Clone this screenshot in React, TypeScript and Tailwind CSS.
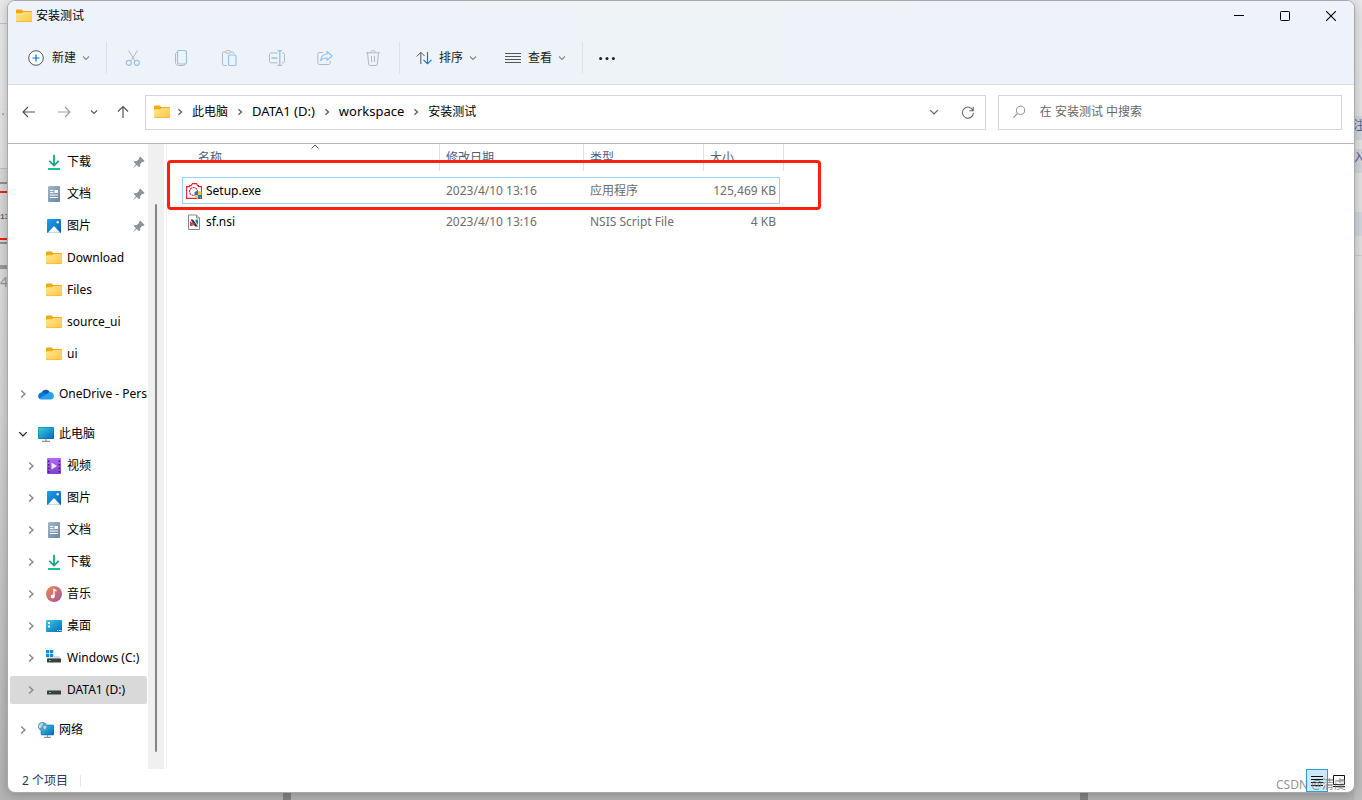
import { useState } from "react";
import type { ReactNode } from "react";

type IconProps = { className?: string };

function Svg({ children, className = "size-4" }: { children: ReactNode; className?: string }) {
  return (
    <svg className={`shrink-0 ${className}`} viewBox="0 0 16 16" fill="none" aria-hidden="true">
      {children}
    </svg>
  );
}

function FolderIcon() {
  return (
    <Svg>
      <defs>
        <linearGradient id="folder" x1="0" y1="0" x2="1" y2="1">
          <stop offset="0" stopColor="#ffe69a" />
          <stop offset="1" stopColor="#ffc83a" />
        </linearGradient>
      </defs>
      <path d="M0 2.5a1 1 0 0 1 1-1h4.6l1.6 1.5H15a1 1 0 0 1 1 1V8H0z" fill="#f2a90c" />
      <path d="M0 6.2a1 1 0 0 1 1-1h5L7.6 4H15a1 1 0 0 1 1 1v8a1 1 0 0 1-1 1H1a1 1 0 0 1-1-1z" fill="url(#folder)" />
      <path d="M.4 13.6h15.2" stroke="#e9ad2c" strokeWidth=".6" />
    </Svg>
  );
}

function DownloadIcon() {
  return (
    <Svg>
      <path d="M8 .8v10.7M3.2 6.8 8 11.6l4.8-4.8" stroke="#17a683" strokeWidth="1.8" />
      <path d="M2 15h12" stroke="#20bd91" strokeWidth="1.8" />
    </Svg>
  );
}

function DocumentIcon() {
  return (
    <Svg>
      <defs>
        <linearGradient id="doc" x1="0" y1="0" x2="1" y2="1">
          <stop offset="0" stopColor="#a5b9cc" />
          <stop offset="1" stopColor="#66839f" />
        </linearGradient>
      </defs>
      <rect x="2" width="12" height="16" rx="1" fill="url(#doc)" />
      <path d="M4 4.5h3.5M4 6.5h3.5M4 9h8M4 11.5h8" stroke="#fff" strokeWidth="1.1" />
      <rect x="8.5" y="4" width="3.5" height="3" fill="#fff" />
    </Svg>
  );
}

function PictureIcon() {
  return (
    <Svg>
      <defs>
        <linearGradient id="pic" x1="0" y1="0" x2="1" y2="1">
          <stop offset="0" stopColor="#1ba0ea" />
          <stop offset="1" stopColor="#0b62b8" />
        </linearGradient>
      </defs>
      <rect x="1" y="1" width="14" height="14" rx="1" fill="url(#pic)" />
      <path d="M1.8 14.8 7.3 8.7a1 1 0 0 1 1.4 0l5.5 6.1z" fill="#fff" />
      <circle cx="11.7" cy="4.3" r="1.2" fill="#fff" />
    </Svg>
  );
}

function VideoIcon() {
  return (
    <Svg>
      <defs>
        <linearGradient id="vid" x1="0" y1="0" x2="0" y2="1">
          <stop offset="0" stopColor="#b26af0" />
          <stop offset="1" stopColor="#7f3fd0" />
        </linearGradient>
      </defs>
      <rect x="1" width="14" height="16" rx="1" fill="url(#vid)" />
      <path d="M2.7 2.5v12M13.3 2.5v12" stroke="#3f1a7c" strokeWidth="1.5" strokeDasharray="1.5 2" />
      <path d="M5.5 4.5 11 8l-5.5 3.5z" fill="#f2e8fd" />
    </Svg>
  );
}

function MusicIcon() {
  return (
    <Svg>
      <defs>
        <linearGradient id="mus" x1="0" y1="0" x2="1" y2="1">
          <stop offset="0" stopColor="#f08a4b" />
          <stop offset="1" stopColor="#a3549f" />
        </linearGradient>
      </defs>
      <circle cx="8" cy="8" r="8" fill="url(#mus)" />
      <circle cx="6.7" cy="10.5" r="2" fill="#fff" />
      <path d="M8 10.5v-7l2.5 1.5" stroke="#fff" strokeWidth="1.4" />
    </Svg>
  );
}

function DesktopIcon() {
  return (
    <Svg>
      <defs>
        <linearGradient id="desk" x1="0" y1="0" x2="1" y2="1">
          <stop offset="0" stopColor="#35cfe4" />
          <stop offset="1" stopColor="#0a67b9" />
        </linearGradient>
      </defs>
      <rect y="2" width="16" height="12" rx="1" fill="url(#desk)" />
      <path d="M2 4h2v2H2zM2 7.5h2v2H2z" fill="#fff" />
      <path d="M11 12.500h1M12.8 12.500h1M14.5 12.500h1" stroke="#fff" />
    </Svg>
  );
}

function DriveIcon({ system = false }: { system?: boolean }) {
  return (
    <Svg>
      {system && (
        <path d="M0 0h3.3v3.3H0zM4 0h3.3v3.3H4zM0 4h3.3v3.3H0zM4 4h3.3v3.3H4z" fill="#0f8ee0" />
      )}
      <path d={system ? "M7.5 6H13l2 3H1l1-1.500h5.500z" : "M3 6h10l2 2.500H1z"} fill="#d5d7d9" />
      <rect x="1" y="8.5" width="14" height="4" rx=".5" fill="#3b3f42" />
      <path d="M3 10.5h1.8" stroke="#4fdc66" strokeWidth="1.2" />
    </Svg>
  );
}

function ThisPcIcon() {
  return (
    <Svg>
      <rect y="1" width="16" height="12" rx="1" fill="#0e6f94" />
      <rect x=".5" y="1.5" width="15" height="11" rx=".5" fill="url(#desk)" />
      <path d="M8 13v2.3M4 15.4h8" stroke="#8b959d" strokeWidth="1.2" />
    </Svg>
  );
}

function NetworkIcon() {
  return (
    <Svg>
      <rect x="3" y="3" width="13" height="10" rx="1" fill="url(#desk)" stroke="#12608a" strokeWidth=".5" />
      <path d="M9.5 13v2M6 15.4h7" stroke="#8b959d" strokeWidth="1.2" />
      <circle cx="4.5" cy="4.5" r="4.5" fill="#5b9fc4" />
      <path d="M1 3.5c1.5-2.500 3-2.500 4-2 .5 1.500-1.500 1.500-1.500 3S2 6.500 1 6zM5.500 4c1-.5 2.500 0 3 1L7 7.500c-1-.5-2-2-1.500-3.500z" fill="#b8e0ee" />
    </Svg>
  );
}

function OneDriveIcon() {
  return (
    <Svg>
      <path d="M3.5 7.5A4.5 4.5 0 0 1 11.8 6L9 9l-5 3.500H3A3 3 0 0 1 3.500 7z" fill="#0a5fb5" />
      <path d="M5.5 6.5 12 10.5l-9 2.8A3.3 3.3 0 0 1 .2 9.8C.3 7.5 3 5.8 5.5 6.5z" fill="#0f78d4" />
      <path d="M11.5 6a3.7 3.7 0 0 1 4.3 4 3.1 3.1 0 0 1-3 3.4H3.3a3 3 0 0 1-2-.8L8 8.500z" fill="#28a0ea" />
    </Svg>
  );
}

function PinIcon() {
  return (
    <Svg className="size-3">
      <path d="M9.5.5l6 6-2 1.500H12L9.500 11v3L8 15l-3-3-4 3.500-.5-.5L4 11 1 8l1-1.500h3L8 4V2.500z" fill="#8b949b" />
    </Svg>
  );
}

function SetupIcon() {
  return (
    <Svg>
      <path d="M.6 15.4V3.600h2.900v-1H5L6.500.6h4l1 2h1v1h3v11.800z" fill="#fff" stroke="#e5232e" strokeWidth="1.1" />
      <circle cx="7.5" cy="8.5" r="4" stroke="#e5232e" strokeWidth="1.1" strokeDasharray="2.2 .7" />
      <path d="M8.5 9 12 7.500V12H8.500z" fill="#2375c9" />
      <path d="M12 7.500 15.500 9v3H12z" fill="#f8c733" />
      <path d="M8.500 12H12v4c-2-.7-3.500-2-3.500-4z" fill="#f8c733" />
      <path d="M12 12h3.500c0 2-1.500 3.300-3.500 4z" fill="#2375c9" />
    </Svg>
  );
}

function NsiIcon() {
  return (
    <Svg>
      <path d="M2.500 1h8l3 3v11.500h-11z" fill="#fff" stroke="#85898c" />
      <path d="M10.500 1v3h3" stroke="#85898c" />
      <path d="M4.500 5.500H7l5 7H9z" fill="#1d3d5c" />
      <path d="M4 7l2.500 2.500V12H4z" fill="#d83a32" />
      <path d="M9.500 5.500H12V11L9.500 8z" fill="#2a7fae" />
      <path d="M5.500 8 9 9.500 7 12z" fill="#d83a32" />
    </Svg>
  );
}

function ChevronRight({ className = "size-2 text-[#555]" }: IconProps) {
  return (
    <Svg className={className}>
      <path d="M5 2.500 11 8l-6 5.500" stroke="currentColor" strokeWidth="2.4" />
    </Svg>
  );
}

function ChevronDown({ className = "size-2 text-[#888]" }: IconProps) {
  return (
    <Svg className={className}>
      <path d="M2 5l6 6 6-6" stroke="currentColor" strokeWidth="2.2" />
    </Svg>
  );
}

const GRAY = "#b4b8bd";
const BLUE = "#93c3ea";

const ACTIONS: { label: string; icon: ReactNode }[] = [
  {
    label: "剪切",
    icon: (
      <>
        <path d="M3.500.5 10 10.700M12.500.5 6 10.700" stroke={GRAY} />
        <circle cx="3.8" cy="12.8" r="2.5" stroke={BLUE} strokeWidth="1.2" />
        <circle cx="11.8" cy="12.8" r="2.5" stroke={BLUE} strokeWidth="1.2" />
      </>
    ),
  },
  {
    label: "复制",
    icon: (
      <>
        <path d="M4 2.500c-1 0-1.500.7-1.500 1.500v8.500c0 1.700 1 3 3 3h5.200c.8 0 1.300-.5 1.300-1.200" stroke={GRAY} />
        <rect x="4.5" y=".5" width="9" height="13.5" rx="1.8" stroke={BLUE} strokeWidth="1.2" />
      </>
    ),
  },
  {
    label: "粘贴",
    icon: (
      <>
        <path d="M4.500 2H2.700c-.7 0-1.200.5-1.200 1.200v11c0 .7.5 1.300 1.200 1.300H6M9.500 2h2c.7 0 1.200.5 1.200 1.200V4" stroke={GRAY} />
        <rect x="4.5" y=".6" width="5" height="2.6" rx="1.3" stroke={GRAY} />
        <rect x="7.5" y="5" width="7.5" height="10.5" rx="1.2" stroke={BLUE} strokeWidth="1.2" />
      </>
    ),
  },
  {
    label: "重命名",
    icon: (
      <>
        <path d="M8.500 3H2C1 3 .5 3.700.5 4.500v6.800c0 .9.600 1.500 1.500 1.500h6.500M13 3h1c.9 0 1.500.7 1.500 1.500v6.800c0 .9-.6 1.500-1.500 1.500h-1" stroke={GRAY} />
        <path d="M10.800 1v14M8.500.6h4.600M8.500 15.400h4.600M2.500 8h6" stroke={BLUE} strokeWidth="1.3" />
      </>
    ),
  },
  {
    label: "共享",
    icon: (
      <>
        <path d="M6 2.500H3C1.500 2.500.8 3.300.8 4.500v8c0 1.300.8 2 2 2h8.500c1.200 0 2-.7 2-2V11" stroke={GRAY} />
        <path d="M10 1.500 15.200 6 10 10.300V8c-2.600 0-4.600.6-6.300 2.700C4 7 6.300 4.300 10 4z" stroke={BLUE} strokeWidth="1.2" strokeLinejoin="round" />
      </>
    ),
  },
  {
    label: "删除",
    icon: (
      <path d="M1 2.800h14M2.500 3l1.200 11.300c.1.700.6 1.200 1.300 1.200h6c.7 0 1.200-.5 1.300-1.200L13.500 3M6 2.500C6 1 7 .5 8 .5s2 .5 2 2M6.500 6v6M9.500 6v6" stroke={GRAY} />
    ),
  },
];

type NavEntry = { id: string; label: string; icon: ReactNode; root?: boolean; pinned?: boolean; chevron?: "right" | "down" };

const NAV_GROUPS: NavEntry[][] = [
  [
    { id: "q-download", label: "下载", icon: <DownloadIcon />, pinned: true },
    { id: "q-docs", label: "文档", icon: <DocumentIcon />, pinned: true },
    { id: "q-pics", label: "图片", icon: <PictureIcon />, pinned: true },
    { id: "q-dl", label: "Download", icon: <FolderIcon /> },
    { id: "q-files", label: "Files", icon: <FolderIcon /> },
    { id: "q-source", label: "source_ui", icon: <FolderIcon /> },
    { id: "q-ui", label: "ui", icon: <FolderIcon /> },
  ],
  [{ id: "onedrive", label: "OneDrive - Personal", icon: <OneDriveIcon />, root: true, chevron: "right" }],
  [
    { id: "pc", label: "此电脑", icon: <ThisPcIcon />, root: true, chevron: "down" },
    { id: "video", label: "视频", icon: <VideoIcon />, chevron: "right" },
    { id: "pics", label: "图片", icon: <PictureIcon />, chevron: "right" },
    { id: "docs", label: "文档", icon: <DocumentIcon />, chevron: "right" },
    { id: "downloads", label: "下载", icon: <DownloadIcon />, chevron: "right" },
    { id: "music", label: "音乐", icon: <MusicIcon />, chevron: "right" },
    { id: "desktop", label: "桌面", icon: <DesktopIcon />, chevron: "right" },
    { id: "c", label: "Windows (C:)", icon: <DriveIcon system />, chevron: "right" },
    { id: "d", label: "DATA1 (D:)", icon: <DriveIcon />, chevron: "right" },
  ],
  [{ id: "network", label: "网络", icon: <NetworkIcon />, root: true, chevron: "right" }],
];

const FILES = [
  { name: "Setup.exe", date: "2023/4/10 13:16", type: "应用程序", size: "125,469 KB", icon: <SetupIcon /> },
  { name: "sf.nsi", date: "2023/4/10 13:16", type: "NSIS Script File", size: "4 KB", icon: <NsiIcon /> },
];

const CRUMBS = ["此电脑", "DATA1 (D:)", "workspace", "安装测试"];

function Backdrop() {
  return (
    <div className="absolute inset-0 overflow-hidden bg-gradient-to-b from-[#ebebeb] via-[#d6d6d6] to-[#b4b4b4]" aria-hidden="true">
      <div className="absolute inset-x-0 top-[23px] h-px bg-[#c4c4c4]" />
      <span className="absolute left-0 top-[106px] font-['Liberation_Mono'] text-[10px] text-[#4b8c96]">.1</span>
      <div className="absolute left-0 top-[168px] h-[102px] w-2 border-t border-[#c0c0c0] bg-[#d9d9d9]" />
      <div className="absolute left-0 top-[182px] h-[62px] w-2 border-y-2 border-[#909090]" />
      <div className="absolute left-0 top-[191px] h-[49px] w-2 border-y-2 border-[#f0200f]" />
      <span className="absolute left-0 top-[212px] font-['Liberation_Mono'] text-[8px] text-[#333]">13</span>
      <div className="absolute left-0 top-[265px] h-1 w-2 bg-[#999]" />
      <span className="absolute left-0 top-[272px] text-sm text-[#999]">4</span>
      <div className="absolute right-0 top-0 h-full w-2 bg-gradient-to-b from-[#e8e8ea] via-[#dedede] to-[#bdbdbd]" />
      <div className="absolute right-0 top-[116px] h-6 w-2 bg-[#d3d7e0]" />
      <div className="absolute right-0 top-[149px] h-6 w-2 bg-[#d3d7e0]" />
      <span className="absolute left-[calc(100%-9px)] top-[118px] text-xs text-[#5d6288]">注</span>
      <span className="absolute left-[calc(100%-9px)] top-[150px] text-xs text-[#5d6288]">入</span>
      <div className="absolute right-0 top-[212px] h-6 w-2 bg-[#d3d7e0]" />
      <div className="absolute right-0 top-[255px] h-px w-2 bg-[#cfcfcf]" />
      <div className="absolute bottom-0 left-[283px] h-2 w-2 bg-[#858585]" />
      <div className="absolute bottom-0 right-[274px] h-2 w-2 bg-[#858585]" />
    </div>
  );
}

function TitleBar() {
  return (
    <div className="flex h-[30px] items-center">
      <div className="flex flex-1 items-center gap-1 pl-2">
        <FolderIcon />
        <h1 className="text-black">安装测试</h1>
      </div>
      <button aria-label="最小化" className="grid h-full w-[46px] place-items-center">
        <svg className="size-[10px]" viewBox="0 0 10 10"><path d="M0 4.500h10" stroke="#000" /></svg>
      </button>
      <button aria-label="最大化" className="grid h-full w-[46px] place-items-center">
        <svg className="size-[10px]" viewBox="0 0 10 10" fill="none"><rect x=".5" y=".5" width="9" height="9" rx=".8" stroke="#000" /></svg>
      </button>
      <button aria-label="关闭" className="grid h-full w-[46px] place-items-center">
        <svg className="size-[10px]" viewBox="0 0 10 10"><path d="M0 0l10 10M10 0 0 10" stroke="#000" strokeWidth="1.1" /></svg>
      </button>
    </div>
  );
}

function Toolbar() {
  return (
    <div className="flex h-[53px] items-center text-[#1a1a1a]">
      <button className="ml-5 flex h-8 items-center">
        <Svg>
          <circle cx="8" cy="8" r="7.3" fill="#f8fbfe" stroke="#555" />
          <path d="M8 4.500v7M4.500 8h7" stroke="#0078d4" strokeWidth="1.2" />
        </Svg>
        <span className="ml-2 mr-1.5">新建</span>
        <ChevronDown />
      </button>
      <div className="ml-4 mr-0.5 h-8 w-px bg-[#dde2e7]" />
      {ACTIONS.map(({ label, icon }) => (
        <button key={label} aria-label={label} disabled className="grid h-8 w-12 place-items-center">
          <Svg>{icon}</Svg>
        </button>
      ))}
      <div className="ml-0.5 mr-4 h-8 w-px bg-[#dde2e7]" />
      <button className="flex h-8 items-center">
        <Svg>
          <path d="M4.800 14V2.500M.7 6.500 4.800 2.300 8.500 6" stroke="#555" />
          <path d="M11.500 2v11.500M7.500 9.800l4 4 4-4" stroke="#0078d4" strokeWidth="1.1" />
        </Svg>
        <span className="ml-[7px] mr-1.5">排序</span>
        <ChevronDown />
      </button>
      <button className="ml-7 flex h-8 items-center">
        <Svg>
          <path d="M0 3.500h16M0 6.500h16M0 9.500h16M0 12.500h16" stroke="#555" />
        </Svg>
        <span className="ml-[7px] mr-1.5">查看</span>
        <ChevronDown />
      </button>
      <div className="mx-4 h-8 w-px bg-[#dde2e7]" />
      <button aria-label="更多" className="grid h-8 place-items-center">
        <Svg>
          <circle cx="1.6" cy="8.5" r="1.5" fill="#222" />
          <circle cx="8" cy="8.5" r="1.5" fill="#222" />
          <circle cx="14.4" cy="8.5" r="1.5" fill="#222" />
        </Svg>
      </button>
    </div>
  );
}

function AddressRow() {
  return (
    <div className="flex h-[59px] shrink-0 items-center border-b border-[#b9b9b9] pb-1 pl-[3px] pr-3">
      <button aria-label="后退" className="grid h-8 w-[35px] place-items-center">
        <Svg><path d="M14 8H2.500M7 3 2 8l5 5" stroke="#555" strokeWidth="1.2" /></Svg>
      </button>
      <button aria-label="前进" className="grid h-8 w-[35px] place-items-center">
        <Svg><path d="M2 8h11.500M9 3l5 5-5 5" stroke="#a0a0a0" strokeWidth="1.2" /></Svg>
      </button>
      <button aria-label="最近的位置" className="grid h-8 w-[26px] place-items-center">
        <ChevronDown className="size-2 text-[#555]" />
      </button>
      <button aria-label="向上" className="grid h-8 w-8 place-items-center">
        <Svg><path d="M8 14V2.500M3 7.500l5-5 5 5" stroke="#555" strokeWidth="1.2" /></Svg>
      </button>
      <nav aria-label="地址" className="ml-1.5 flex h-[35px] flex-[5] items-center border border-[#d6d6d6] px-2 text-black">
        <span className="-mr-0.5">
          <FolderIcon />
        </span>
        {CRUMBS.map((crumb) => (
          <div key={crumb} className="ml-2 flex items-center gap-2">
            <ChevronRight />
            <a href="#" className={/[a-z]/i.test(crumb) ? "text-[13px]" : ""}>{crumb}</a>
          </div>
        ))}
        <button aria-label="历史记录" className="ml-auto mr-[22px]">
          <ChevronDown className="size-[10px] text-[#666]" />
        </button>
        <button aria-label="刷新" className="mr-0.5">
          <Svg className="size-[14px]">
            <path d="M14 2v4.500H9.500M13.600 6A6.300 6.300 0 1 0 14.200 9" stroke="#666" strokeWidth="1.2" />
          </Svg>
        </button>
      </nav>
      <label className="ml-3 flex h-[35px] flex-[2] items-center gap-[14px] border border-[#d6d6d6] pl-[13px]">
        <Svg className="size-[14px]">
          <circle cx="9.8" cy="6" r="4.7" stroke="#8a8a93" strokeWidth="1.1" />
          <path d="M6.400 9.500 1.500 14.500" stroke="#8a8a93" strokeWidth="1.2" />
        </Svg>
        <input
          type="search"
          aria-label="搜索"
          placeholder="在 安装测试 中搜索"
          className="min-w-0 flex-1 text-black outline-none placeholder:text-[#666]"
        />
      </label>
    </div>
  );
}

function Sidebar() {
  const [current, setCurrent] = useState("d");

  return (
    <aside className="flex w-[156px] shrink-0">
      <nav aria-label="文件夹" className="flex w-[140px] flex-col gap-3 overflow-hidden py-1 pl-0.5 pr-px">
        {NAV_GROUPS.map((group) => (
          <ul key={group[0].id} className="flex flex-col gap-1">
            {group.map(({ id, label, icon, root, pinned, chevron }) => (
              <li key={id}>
                <button
                  onClick={() => setCurrent(id)}
                  className={`flex h-7 w-full items-center overflow-hidden whitespace-nowrap rounded-xs pr-0.5 text-left text-black ${
                    root ? "pl-2" : "pl-4"
                  } ${current === id ? "bg-[#d9d9d9]" : ""}`}
                >
                  <span className="mr-3 w-2 shrink-0">
                    {chevron === "right" && <ChevronRight className="size-[10px] text-[#8a8a8a]" />}
                    {chevron === "down" && <ChevronDown className="size-[10px] text-[#222]" />}
                  </span>
                  {icon}
                  <span className="ml-[5px]">{label}</span>
                  {pinned && (
                    <span className="ml-auto">
                      <PinIcon />
                    </span>
                  )}
                </button>
              </li>
            ))}
          </ul>
        ))}
      </nav>
      <div className="flex w-4 justify-center bg-[#f0f0f0] pb-[17px] pt-[60px]">
        <div className="w-0.5 rounded-full bg-[#858585]" />
      </div>
    </aside>
  );
}

function FileList() {
  return (
    <main className="relative ml-0.5 flex-1 border-l border-[#f3f3f3] pl-[15px]">
      <table className="table-fixed border-collapse text-left">
        <colgroup>
          <col className="w-[258px]" />
          <col className="w-[144px]" />
          <col className="w-[120px]" />
          <col className="w-[76px]" />
          <col className="w-1" />
        </colgroup>
        <thead className="text-[#4c607a]">
          <tr>
            <th className="p-0 pb-1.5 font-normal">
              <div className="relative flex h-[27px] items-center border-r border-[#e2e2e2] pl-4">
                名称
                <svg className="absolute left-[129px] top-0 size-2" viewBox="0 0 8 8" fill="none">
                  <path d="M.5 4.500 4 1l3.500 3.500" stroke="#555" />
                </svg>
              </div>
            </th>
            <th className="p-0 pb-1.5 font-normal">
              <div className="flex h-[27px] items-center border-r border-[#e2e2e2] pl-1.5">修改日期</div>
            </th>
            <th className="p-0 pb-1.5 font-normal">
              <div className="flex h-[27px] items-center border-r border-[#e2e2e2] pl-1.5">类型</div>
            </th>
            <th colSpan={2} className="p-0 pb-1.5 font-normal">
              <div className="flex h-[27px] items-center border-r border-[#e2e2e2] pl-1.5">大小</div>
            </th>
          </tr>
        </thead>
        <tbody className="text-[#6d6d6d]">
          {FILES.map(({ name, date, type, size, icon }, i) => {
            const edge = i === 0 ? "border-[#99d1ff]" : "border-transparent";
            return (
              <tr key={name}>
                <td className="p-0 pb-1">
                  <div className={`flex h-[27px] items-center gap-1 border-y border-l pl-[3px] text-black ${edge}`}>
                    {icon}
                    {name}
                  </div>
                </td>
                <td className="p-0 pb-1">
                  <div className={`flex h-[27px] items-center border-y pl-1.5 ${edge}`}>{date}</div>
                </td>
                <td className="p-0 pb-1">
                  <div className={`flex h-[27px] items-center border-y pl-1.5 ${edge}`}>{type}</div>
                </td>
                <td className="p-0 pb-1">
                  <div className={`flex h-[27px] items-center justify-end whitespace-nowrap border-y border-r pr-[3px] ${edge}`}>{size}</div>
                </td>
                <td className="p-0" />
              </tr>
            );
          })}
        </tbody>
      </table>
      {/* highlight frame around the installer */}
      <div className="pointer-events-none absolute left-0 top-4 h-[50px] w-[654px] rounded-sm border-3 border-[#fb2012]" />
    </main>
  );
}

function StatusBar() {
  return (
    <footer className="relative flex h-[23px] shrink-0 items-center pl-3.5 text-[#26365c]">
      <span>2 个项目</span>
      <div className="ml-3 h-3 w-px bg-[#e8e8e8]" />
      <button aria-label="详细信息" className="ml-auto grid h-[23px] w-[22px] place-items-center border border-[#26a0da] bg-[#cde8f6]">
        <svg className="h-[11px] w-3" viewBox="0 0 12 11"><path d="M0 1.500h12M0 4.500h12M0 7.500h12M0 10.500h12" stroke="#111" /></svg>
      </button>
      <button aria-label="大图标" className="ml-[5px] mr-[9px] grid h-full place-items-center">
        <svg className="size-3" viewBox="0 0 12 12" fill="none"><path d="M.5.500h11v9H.5zM0 11.500h12" stroke="#111" /></svg>
      </button>
      <span className="absolute right-2 top-2 whitespace-nowrap leading-4 text-[#777]/80">CSDN @清虞</span>
    </footer>
  );
}

export default function App() {
  return (
    <div className="relative h-screen overflow-hidden font-['Noto_Sans','Noto_Sans_CJK_SC',sans-serif] text-xs">
      <Backdrop />
      <div className="relative h-full px-[7px] pb-[7px]">
        <div className="flex h-full flex-col overflow-hidden rounded-lg border border-[#a9a9a9] bg-white shadow-[0_2px_12px_rgba(0,0,0,0.25)]">
          <header className="shrink-0 border-b border-[#d8dee5] bg-gradient-to-r from-[#eef3fb] via-[#edf3f7] to-[#eef2fb]">
            <TitleBar />
            <Toolbar />
          </header>
          <AddressRow />
          <div className="flex min-h-0 flex-1">
            <Sidebar />
            <FileList />
          </div>
          <StatusBar />
        </div>
      </div>
    </div>
  );
}
